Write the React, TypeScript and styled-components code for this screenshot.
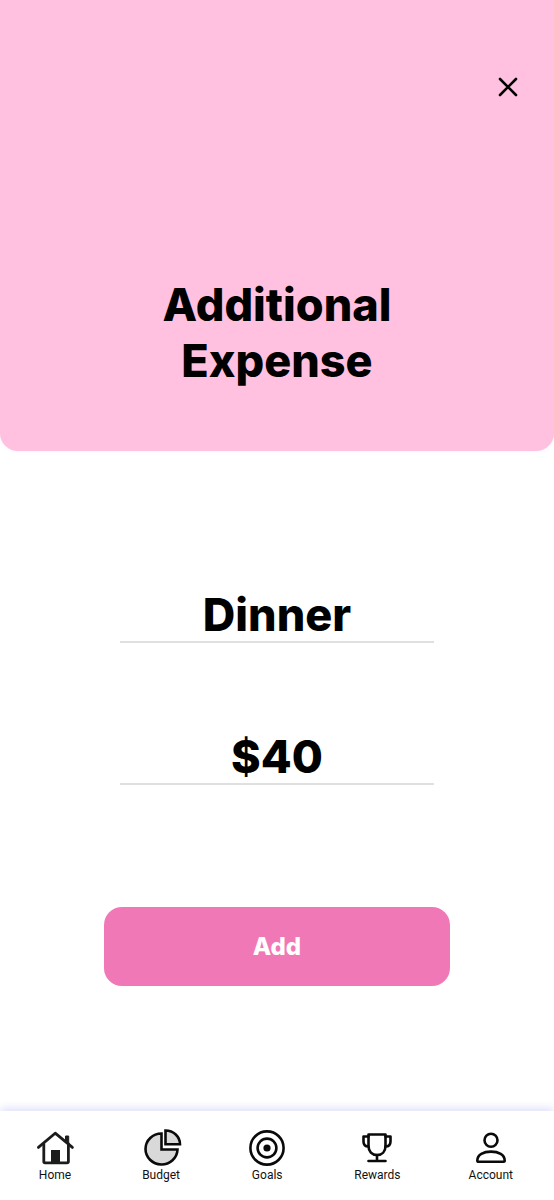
import React, { useState } from "react";
import styled, { createGlobalStyle } from "styled-components";

const GlobalStyle = createGlobalStyle`
  *, *::before, *::after { box-sizing: border-box; }
  body {
    margin: 0;
    background: #ffffff;
    color: #000000;
    font-family: Inter, "Liberation Sans", sans-serif;
  }
`;

const Screen = styled.div`
  display: flex;
  flex-direction: column;
  min-height: 100vh;
`;

const Header = styled.header`
  display: flex;
  flex-direction: column;
  padding: 65px 24px 62px;
  background: #ffc1df;
  border-radius: 0 0 18px 18px;
  box-shadow: 0 -2px 6px #eee6ff;
`;

const CloseButton = styled.button`
  display: flex;
  align-items: center;
  justify-content: center;
  align-self: flex-end;
  width: 44px;
  height: 44px;
  padding: 0;
  border: 0;
  background: transparent;
  color: inherit;
  cursor: pointer;
`;

const Title = styled.h1`
  align-self: center;
  max-width: 280px;
  margin: 168px 0 0;
  font-size: 45px;
  font-weight: 800;
  line-height: 56px;
  text-align: center;
`;

const Form = styled.form`
  display: flex;
  flex: 1;
  flex-direction: column;
  align-items: center;
  padding: 136px 24px 124px;
`;

const Fields = styled.div`
  display: flex;
  flex-direction: column;
  gap: 86px;
  width: 100%;
  max-width: 314px;
`;

const Field = styled.input`
  width: 100%;
  height: 56px;
  padding: 0;
  border: 0;
  border-bottom: 2px solid #e0e0e0;
  border-radius: 0;
  outline: 0;
  background: transparent;
  color: inherit;
  font-family: inherit;
  font-size: 45px;
  font-weight: 800;
  text-align: center;
`;

const AddButton = styled.button`
  width: 100%;
  max-width: 346px;
  height: 79px;
  margin-top: 122px;
  border: 0;
  border-radius: 18px;
  background: #f178b6;
  color: #ffffff;
  font-family: inherit;
  font-size: 24px;
  font-weight: 800;
  cursor: pointer;
`;

const TabBar = styled.nav`
  display: flex;
  justify-content: space-between;
  padding: 17px 41px 18px 36px;
  background: #ffffff;
  box-shadow: 0 -3px 8px #dfe2fb;
`;

const Tab = styled.a`
  display: flex;
  flex-direction: column;
  align-items: center;
  color: #111111;
  font-family: Roboto, "Liberation Sans", sans-serif;
  font-size: 12px;
  line-height: 14px;
  text-decoration: none;
`;

const TabIcon = styled.svg`
  width: 38px;
  height: 40px;
  overflow: visible;
  fill: none;
  stroke: #0a0a0a;
  stroke-width: 2.6;
  stroke-linecap: round;
  stroke-linejoin: round;
`;

const tabs = [
  {
    label: "Home",
    icon: (
      <g stroke="#1c1c1c">
        <path d="M29.500 14V8h3.200V17" fill="#1c1c1c" strokeWidth="1" />
        <path d="M2.400 19.400 19.200 5.200 36.400 19.400" strokeWidth="2.8" />
        <path d="M7.800 16v17.600q0 1.200 1.200 1.200h22q1.400 0 1.400-1.200V16" strokeWidth="2.8" />
        <path d="M15 22h9v12.500h-9z" fill="#1c1c1c" stroke="none" />
      </g>
    ),
  },
  {
    label: "Budget",
    icon: (
      <g fill="#d9d9d9" strokeLinejoin="miter">
        <path d="M19.500 5.500V21.500H35.500A16 15.500 0 1 1 19.500 5.500z" />
        <path d="M23.500 2.500V16.200H38A14.500 13.700 0 0 0 23.500 2.500z" />
      </g>
    ),
  },
  {
    label: "Goals",
    icon: (
      <>
        <circle cx="19" cy="20" r="16.600" />
        <circle cx="19" cy="20" r="9.400" />
        <circle cx="19" cy="20" r="3.600" fill="#0a0a0a" stroke="none" />
      </>
    ),
  },
  {
    label: "Rewards",
    icon: (
      <>
        <path d="M10.500 6.500h17v11.500c0 5.500-3.500 9-8.500 9s-8.500-3.500-8.500-9z" />
        <path d="M10.500 8.500H5.500v5q0 5 5 5M27.500 8.500h5v5q0 5-5 5M19 27v6M10.500 33h17" />
      </>
    ),
  },
  {
    label: "Account",
    icon: (
      <>
        <circle cx="19" cy="12.200" r="6.500" />
        <path d="M5.300 32.600c0-6 6.200-9 13.700-9s13.700 3 13.700 9q0 1.200-1.200 1.200h-25q-1.200 0-1.200-1.200z" />
      </>
    ),
  },
];

export default function App() {
  const [name, setName] = useState("Dinner");
  const [amount, setAmount] = useState("$40");

  return (
    <>
      <GlobalStyle />
      <Screen>
        <Header>
          <CloseButton type="button" aria-label="Close">
            <svg width="20" height="20" viewBox="0 0 20 20" fill="none" stroke="currentColor" strokeWidth="2.6" strokeLinecap="round">
              <path d="M2 2l16 16M18 2L2 18" />
            </svg>
          </CloseButton>
          <Title>Additional Expense</Title>
        </Header>
        <Form onSubmit={(event) => event.preventDefault()}>
          <Fields>
            <Field aria-label="Expense name" value={name} onChange={(event) => setName(event.target.value)} />
            <Field aria-label="Amount" value={amount} onChange={(event) => setAmount(event.target.value)} />
          </Fields>
          <AddButton type="submit">Add</AddButton>
        </Form>
        <TabBar>
          {tabs.map((tab) => (
            <Tab key={tab.label} href={`#${tab.label.toLowerCase()}`}>
              <TabIcon viewBox="0 0 38 40" aria-hidden="true">{tab.icon}</TabIcon>
              {tab.label}
            </Tab>
          ))}
        </TabBar>
      </Screen>
    </>
  );
}
